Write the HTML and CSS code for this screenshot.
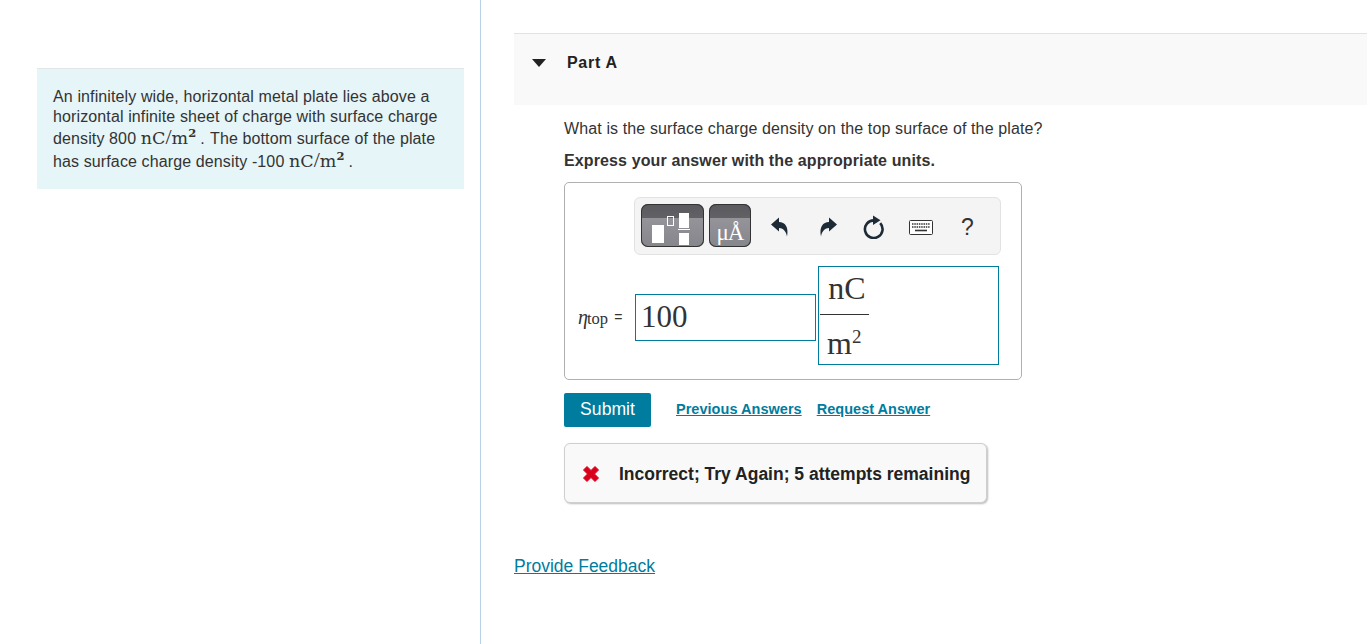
FILE: index.html
```html
<!DOCTYPE html>
<html lang="en">
<head>
<meta charset="utf-8">
<title>Part A</title>
<link rel="stylesheet" href="styles.css">
</head>
<body>
<div class="page">
  <aside class="left">
    <div class="intro">
      <div class="il">An infinitely wide, horizontal metal plate lies above a</div>
      <div class="il">horizontal infinite sheet of charge with surface charge</div>
      <div class="il l3">density 800 <span class="m">nC<span class="sl">/</span>m<sup>2</sup></span><span class="dot">.</span> The bottom surface of the plate</div>
      <div class="il l4">has surface charge density -100 <span class="m">nC<span class="sl">/</span>m<sup>2</sup></span><span class="dot">.</span></div>
    </div>
  </aside>
  <main class="right">
    <header class="parthead">
      <svg class="caret" width="14" height="8" viewBox="0 0 14 8"><path d="M0 0H14L7 8Z" fill="#222"/></svg>
      <span class="parttitle">Part A</span>
    </header>
    <section class="body">
      <p class="q">What is the surface charge density on the top surface of the plate?</p>
      <p class="ex">Express your answer with the appropriate units.</p>
      <div class="answer">
        <div class="toolbar">
          <div class="tbtn tb1">
            <svg width="63" height="43" viewBox="0 0 63 43">
              <rect x="11" y="21" width="12" height="18" fill="#fff"/>
              <rect x="26.500" y="12.500" width="6" height="9" fill="none" stroke="#fff" stroke-width="1"/>
              <rect x="38" y="9" width="10" height="15" fill="#fff"/>
              <rect x="37" y="25" width="12" height="1" fill="#fff"/>
              <rect x="38" y="29" width="10" height="12" fill="#fff"/>
            </svg>
          </div>
          <div class="tbtn tb2"><span class="mu">μÅ</span></div>
          <svg class="ti i1" width="18" height="20" viewBox="0 0 18 20"><path d="M0 7.500 8 .5V5C14 5 18 10 16 19.500 15 14 12 11 8 11V14.500Z" fill="#1d2b36"/></svg>
          <svg class="ti i2" width="18" height="20" viewBox="0 0 18 20"><path d="M18 7.500 10 .5V5C4 5 0 10 2 19.500 3 14 6 11 10 11V14.500Z" fill="#1d2b36"/></svg>
          <svg class="ti i3" width="22" height="24" viewBox="0 0 22 24"><path d="M17.200 8.200A8.800 8.800 0 1 1 11 5.400" fill="none" stroke="#1d2b36" stroke-width="2.600"/><path d="M10 .5 17.500 5.200 10 10Z" fill="#1d2b36"/></svg>
          <svg class="ti i4" width="24" height="15" viewBox="0 0 24 15"><rect x=".5" y=".5" width="23" height="14" rx="1" fill="#fff" stroke="#333"/><path d="M3 4h18M3 7h18" stroke="#333" stroke-width="1.600" stroke-dasharray="1.500 .8"/><path d="M6 10.500h12" stroke="#333" stroke-width="1.600"/></svg>
          <span class="help">?</span>
        </div>
        <div class="eqrow">
          <span class="eta"><i>η</i><span class="sub">top</span> <span class="eq">=</span></span>
          <div class="valbox">100</div>
          <div class="unitbox">
            <div class="frac">
              <div class="num">nC</div>
              <div class="den">m<sup>2</sup></div>
            </div>
          </div>
        </div>
      </div>
      <div class="actions">
        <button class="submit">Submit</button>
        <a class="alink first" href="#">Previous Answers</a>
        <a class="alink" href="#">Request Answer</a>
      </div>
      <div class="feedback">
        <svg class="x" width="18" height="18" viewBox="0 0 18 18"><path d="M1.500 5 5 1.500 9 5.500 13 1.500 16.500 5 12.500 9 16.500 13 13 16.500 9 12.500 5 16.500 1.500 13 5.500 9Z" fill="#d9001b" stroke="#d9001b" stroke-linejoin="round"/></svg>
        <span>Incorrect; Try Again; 5 attempts remaining</span>
      </div>
    </section>
    <a class="pf" href="#">Provide Feedback</a>
  </main>
</div>
</body>
</html>
```
FILE: styles.css
```css
html, body { margin: 0; padding: 0; height: 644px; overflow: hidden; background: #fff; }
body { font-family: "Liberation Sans", Arial, sans-serif; color: #333; font-size: 16px; letter-spacing: .12px; }
.page { display: flex; height: 644px; }
.left { width: 480px; border-right: 1px solid #b8d0e8; padding-top: 68px; flex: none; }
.intro { margin-left: 37px; width: 427px; height: 121px; box-sizing: border-box; background: #e6f5f7; border-top: 1px solid #e2e6e6; padding: 18px 16px 0 16px; font-size: 16px; line-height: 20px; }
.il { height: 20px; white-space: nowrap; }
.l3 { margin-top: 1px; height: 22px; }
.l4 { margin-top: 1px; }
.m { font-family: "DejaVu Serif", serif; font-size: 17.500px; letter-spacing: 0; }
.sl { font-size: 22px; font-family: "Liberation Serif", serif; line-height: 0; }
.m sup { font-size: 11.500px; line-height: 0; vertical-align: 7px; font-weight: bold; }
.dot { margin: 0 1px 0 4px; }
.right { flex: 1; padding: 33px 0 0 33px; min-width: 0; }
.parthead { background: #f9f9f9; border-top: 1px solid #e2e2e2; display: flex; align-items: flex-start; padding: 24px 0 0 18px; height: 47px; }
.caret { margin-top: 1px; }
.parttitle { margin-left: 21px; margin-top: -5px; font-weight: bold; color: #222; font-size: 16px; line-height: 20px; letter-spacing: .7px; }
.body { padding: 14px 0 0 50px; }
.q { margin: 0; line-height: 20px; height: 20px; }
.ex { margin: 12px 0 0; line-height: 20px; height: 20px; font-weight: bold; }
.answer { margin-top: 11px; width: 458px; height: 198px; box-sizing: border-box; border: 1px solid #b0b0b0; border-radius: 5px; padding: 14px 0 0 69px; }
.toolbar { width: 367px; height: 58px; box-sizing: border-box; background: #f4f4f4; border: 1px solid #e2e2e2; border-radius: 6px; display: flex; align-items: center; padding-left: 6px; }
.tbtn { height: 43px; box-sizing: border-box; border-radius: 7px; margin-bottom: 2px; background: linear-gradient(#5a5a5e 0, #626266 33%, #949499 33%, #85858c 100%); box-shadow: inset 0 0 0 1px #333; overflow: hidden; flex: none; }
.tb1 { width: 63px; }
.tb2 { width: 42px; margin-left: 5px; display: flex; justify-content: center; align-items: flex-end; }
.tbtn svg { display: block; }
.mu { font-family: "Liberation Serif", serif; color: #fff; font-size: 23px; line-height: 28px; white-space: nowrap; letter-spacing: -1px; }
.ti { flex: none; margin-top: 2px; }
.i1 { margin-left: 20px; }
.i2 { margin-left: 30px; }
.i3 { margin-left: 26px; }
.i4 { margin-left: 24px; }
.help { margin: 2px 0 0 28px; font-size: 23px; color: #333; }
.eqrow { display: flex; align-items: flex-start; margin-left: -69px; padding-top: 11px; }
.eta { margin: 40px 0 0 13px; width: 57px; font-family: "Liberation Serif", serif; font-size: 17px; line-height: 22px; white-space: nowrap; flex: none; letter-spacing: 0; }
.eta i { font-size: 20px; }
.sub { font-size: 16.500px; margin-left: -1px; }
.eq { font-size: 14px; font-family: "Liberation Sans", sans-serif; margin-left: 2px; position: relative; top: -2px; }
.valbox { margin-top: 28px; width: 181px; height: 47px; box-sizing: border-box; border: 1px solid #007c9e; font-family: "Liberation Serif", serif; font-size: 31px; line-height: 44px; padding-left: 5px; flex: none; letter-spacing: 0; }
.unitbox { margin-left: 2px; width: 181px; height: 99px; box-sizing: border-box; border: 1px solid #007c9e; flex: none; padding-left: 1px; font-family: "Liberation Serif", serif; font-size: 32px; letter-spacing: 0; }
.frac { width: 49px; }
.num { height: 47px; border-bottom: 1px solid #333; text-align: center; line-height: 42px; padding-left: 5px; box-sizing: content-box; margin-right: 0; width: 44px; }
.den { line-height: 56px; padding-left: 8px; margin-left: -1px; white-space: nowrap; }
.den sup { font-size: 19px; line-height: 0; vertical-align: 11px; }
.actions { margin-top: 13px; height: 34px; display: flex; align-items: center; }
.submit { width: 87px; height: 34px; background: #007c9e; color: #fff; border: 0; border-radius: 2px; font: 17.600px "Liberation Sans", sans-serif; padding: 0 0 2px; }
.alink { color: #007c9e; font-weight: bold; font-size: 14.500px; margin: 0 0 2px 15px; text-decoration: underline; letter-spacing: .03px; }
.alink.first { margin-left: 25px; }
.feedback { margin-top: 16px; width: 423px; height: 60px; box-sizing: border-box; background: #f9f9f9; border: 1px solid #cfcfcf; border-radius: 6px; box-shadow: 1px 1px 2px #bbb; display: flex; align-items: center; padding: 2px 0 0 17px; font-weight: bold; font-size: 17.500px; color: #222; white-space: nowrap; letter-spacing: 0; }
.x { flex: none; margin-right: 19px; }
.pf { display: inline-block; margin-top: 53px; color: #007c9e; font-size: 17.500px; text-decoration: underline; letter-spacing: 0; }
```
